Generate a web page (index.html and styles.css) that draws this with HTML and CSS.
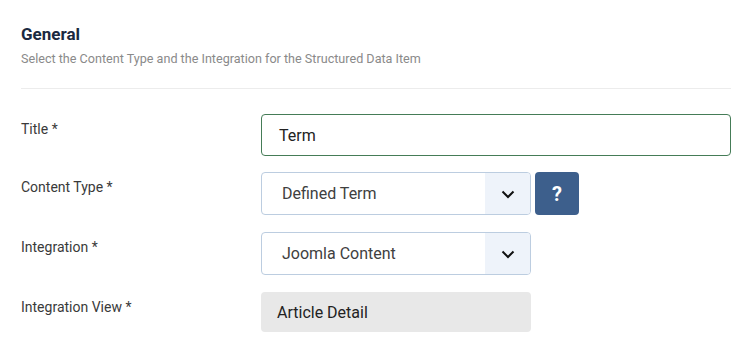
FILE: index.html
```html
<!DOCTYPE html>
<html lang="en">
<head>
<meta charset="utf-8">
<title>General</title>
<link rel="stylesheet" href="styles.css">
</head>
<body>
<div class="panel">
  <h2 class="title">General</h2>
  <p class="desc">Select the Content Type and the Integration for the Structured Data Item</p>
  <hr class="divider">
  <div class="form">
    <div class="row row-input">
      <label class="label">Title *</label>
      <div class="control"><div class="input">Term</div></div>
    </div>
    <div class="row row-select">
      <label class="label">Content Type *</label>
      <div class="control">
        <div class="select">
          <span class="select-value">Defined Term</span>
          <span class="select-arrow"><svg width="14" height="9" viewBox="0 0 14 9"><path d="M1.5 1.5 L7 7 L12.5 1.5" fill="none" stroke="#111" stroke-width="2"/></svg></span>
        </div>
        <button class="help">?</button>
      </div>
    </div>
    <div class="row row-select">
      <label class="label">Integration *</label>
      <div class="control">
        <div class="select">
          <span class="select-value">Joomla Content</span>
          <span class="select-arrow"><svg width="14" height="9" viewBox="0 0 14 9"><path d="M1.5 1.5 L7 7 L12.5 1.5" fill="none" stroke="#111" stroke-width="2"/></svg></span>
        </div>
      </div>
    </div>
    <div class="row row-view">
      <label class="label">Integration View *</label>
      <div class="control"><div class="readonly">Article Detail</div></div>
    </div>
  </div>
</div>
</body>
</html>
```
FILE: styles.css
```css
* { box-sizing: border-box; }
body {
  margin: 0;
  background: #fff;
  font-family: Roboto, "Liberation Sans", sans-serif;
}
.panel {
  padding: 24px 19px 0 21px;
}
.title {
  margin: 0;
  font-size: 17px;
  line-height: 20px;
  font-weight: 700;
  color: #1b2940;
}
.desc {
  margin: 7px 0 0;
  font-size: 12.6px;
  line-height: 16px;
  color: #8a8a8a;
}
.divider {
  margin: 21px 0 0;
  border: 0;
  border-top: 1px solid #ececec;
  height: 0;
}
.form {
  margin-top: 25px;
  display: flex;
  flex-direction: column;
}
.row {
  display: flex;
  align-items: flex-start;
}
.row-input { margin-bottom: 16px; }
.row-select { margin-bottom: 17px; }
.label {
  width: 240px;
  flex: none;
  padding-top: 5px;
  font-size: 14px;
  line-height: 20px;
  color: #3a3a3a;
}
.control {
  flex: 1;
  display: flex;
  gap: 4px;
}
.input {
  flex: 1;
  height: 42px;
  border: 1px solid #457c57;
  border-radius: 4px;
  padding: 0 17px;
  display: flex;
  align-items: center;
  font-size: 16px;
  color: #222;
}
.select {
  width: 270px;
  height: 43px;
  border: 1px solid #bccde0;
  border-radius: 4px;
  display: flex;
  overflow: hidden;
}
.select-value {
  flex: 1;
  display: flex;
  align-items: center;
  padding-left: 20px;
  font-size: 16px;
  color: #404040;
}
.select-arrow {
  width: 45px;
  background: #eef3fa;
  display: flex;
  align-items: center;
  justify-content: center;
  padding-top: 1px;
}
.help {
  width: 44px;
  height: 43px;
  border: 0;
  border-radius: 4px;
  background: #3d5f8c;
  color: #fff;
  font-family: Roboto, "Liberation Sans", sans-serif;
  font-weight: 700;
  font-size: 20px;
  padding: 0;
}
.readonly {
  width: 270px;
  height: 40px;
  border-radius: 4px;
  background: #e8e8e8;
  padding-left: 16px;
  display: flex;
  align-items: center;
  font-size: 16px;
  color: #222;
}
```
